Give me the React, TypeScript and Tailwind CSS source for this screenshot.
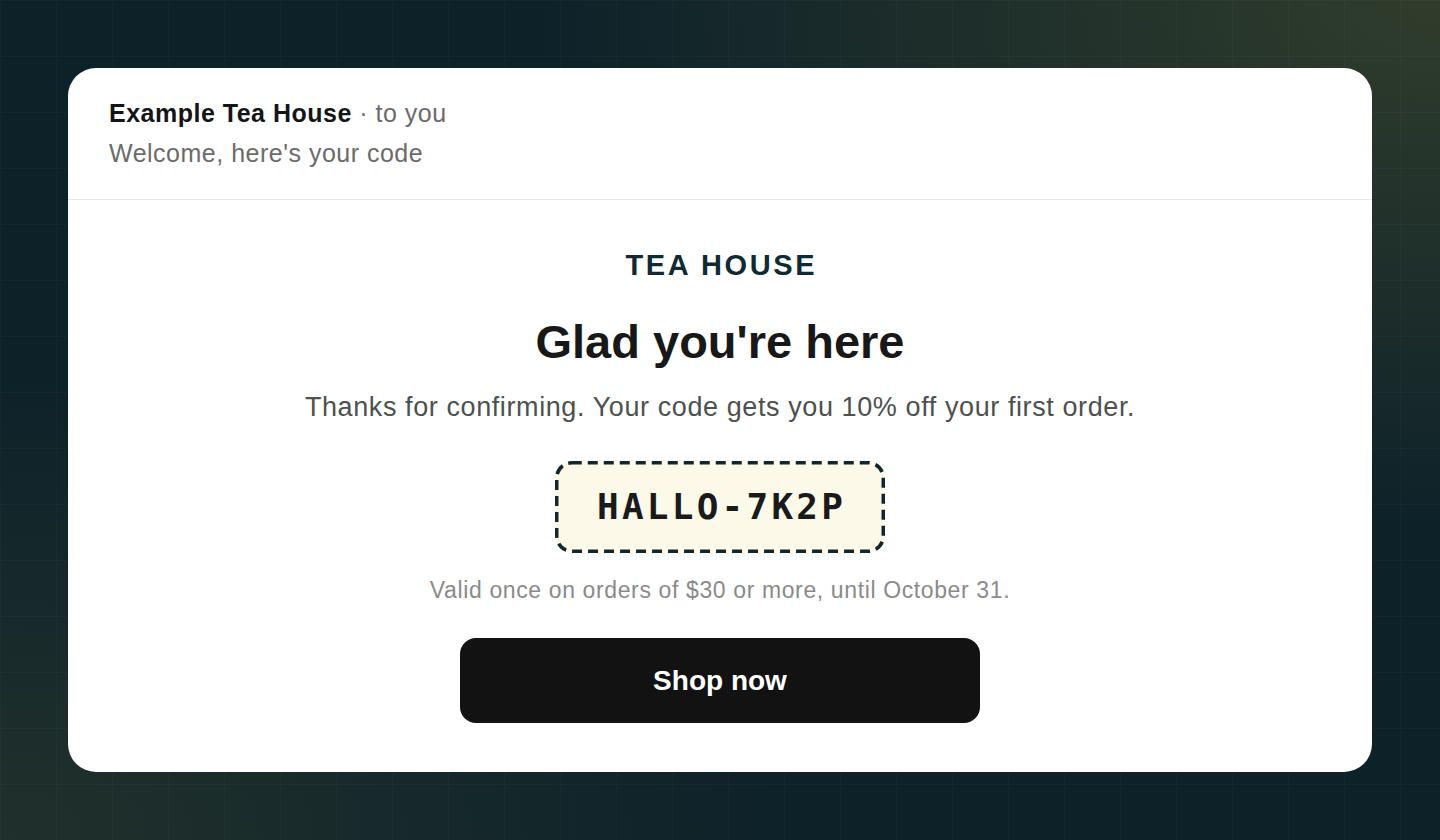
export default function App() {
  return (
    <div className="relative flex h-[840px] w-full items-center justify-center overflow-hidden bg-[#0d2129] p-[68px] font-['Liberation_Sans',sans-serif]">
      {/* glow + grid backdrop */}
      <div className="pointer-events-none absolute inset-0 bg-[radial-gradient(ellipse_at_top_right,rgba(60,70,45,0.75),transparent_45%),radial-gradient(ellipse_at_bottom_left,rgba(40,55,45,0.7),transparent_40%)]" />
      <div className="pointer-events-none absolute inset-0 bg-[linear-gradient(rgba(255,255,255,0.025)_1px,transparent_1px),linear-gradient(90deg,rgba(255,255,255,0.025)_1px,transparent_1px)] bg-[size:56px_56px]" />

      <div className="relative flex h-full w-full flex-col overflow-hidden rounded-[28px] bg-white">
        <div className="border-b border-[#e8e8e6] px-[41px] pt-[28px] pb-[29px] text-[25px] leading-[34px] tracking-[0.02em] text-[#6b6b6b]">
          <div>
            <span className="font-bold text-[#151515]">Example Tea House</span> · to you
          </div>
          <div className="mt-[6px]">Welcome, here's your code</div>
        </div>

        <div className="flex flex-1 flex-col items-center pt-[47px]">
          <div className="pl-[0.09em] text-[29px] font-bold leading-[36px] tracking-[0.09em] text-[#0f2a33]">
            TEA HOUSE
          </div>
          <h1 className="mt-[31px] text-[47px] font-bold leading-[56px] text-[#181818]">Glad you're here</h1>
          <p className="mt-[20px] text-[27px] leading-[34px] tracking-[0.022em] text-[#4d5150]">
            Thanks for confirming. Your code gets you 10% off your first order.
          </p>
          <div className="relative mt-[37px] flex h-[92px] w-[330px] items-center justify-center rounded-[16px] bg-[#fdf9e9]">
            <svg className="absolute inset-0" width="330" height="92" viewBox="0 0 330 92" fill="none">
              <rect x="1.75" y="1.75" width="326.5" height="88.5" rx="15" stroke="#10282c" strokeWidth="3.5" strokeDasharray="10 6" />
            </svg>
            <span className="relative pl-[0.09em] font-['DejaVu_Sans_Mono',monospace] text-[36px] font-bold tracking-[0.09em] text-[#1a1a1a]">
              HALLO-7K2P
            </span>
          </div>
          <p className="mt-[22px] text-[23px] leading-[30px] tracking-[0.027em] text-[#8a8a8a]">
            Valid once on orders of $30 or more, until October 31.
          </p>
          <a
            href="#"
            className="mt-[33px] flex h-[85px] w-[520px] items-center justify-center rounded-[16px] bg-[#121212] text-[28px] font-bold text-white"
          >
            Shop now
          </a>
        </div>
      </div>
    </div>
  );
}
